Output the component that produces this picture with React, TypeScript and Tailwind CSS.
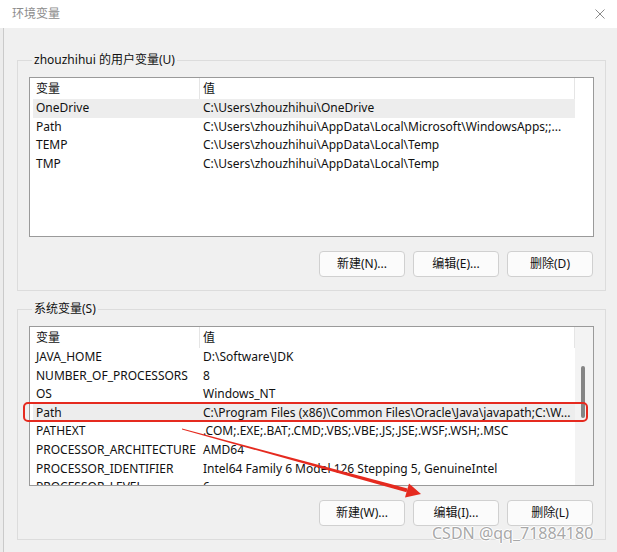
import React from "react";

const FONT = { fontFamily: '"Noto Sans", "Noto Sans CJK SC", sans-serif' };

const userRows: [string, string][] = [
  ["OneDrive", "C:\\Users\\zhouzhihui\\OneDrive"],
  ["Path", "C:\\Users\\zhouzhihui\\AppData\\Local\\Microsoft\\WindowsApps;;..."],
  ["TEMP", "C:\\Users\\zhouzhihui\\AppData\\Local\\Temp"],
  ["TMP", "C:\\Users\\zhouzhihui\\AppData\\Local\\Temp"],
];

const sysRows: [string, string][] = [
  ["JAVA_HOME", "D:\\Software\\JDK"],
  ["NUMBER_OF_PROCESSORS", "8"],
  ["OS", "Windows_NT"],
  ["Path", "C:\\Program Files (x86)\\Common Files\\Oracle\\Java\\javapath;C:\\W..."],
  ["PATHEXT", ".COM;.EXE;.BAT;.CMD;.VBS;.VBE;.JS;.JSE;.WSF;.WSH;.MSC"],
  ["PROCESSOR_ARCHITECTURE", "AMD64"],
  ["PROCESSOR_IDENTIFIER", "Intel64 Family 6 Model 126 Stepping 5, GenuineIntel"],
  ["PROCESSOR_LEVEL", "6"],
];

function VarList({
  rows,
  selected,
  scroll,
}: {
  rows: [string, string][];
  selected: number;
  scroll?: boolean;
}) {
  return (
    <div className="flex h-[160px] w-[565px] overflow-hidden border border-[#9a9a9a] bg-white">
      <div className="flex w-[545px] flex-col pl-[3px]">
        <div className="flex h-[21px] shrink-0 items-center text-[12px] text-[#111]">
          <div className="flex h-full w-[167px] items-center border-r border-[#e5e5e5] pl-[3px] pt-[1px]">变量</div>
          <div className="flex h-full w-[375px] items-center border-r border-[#e5e5e5] pl-[3px] pt-[1px]">值</div>
        </div>
        {rows.map(([k, v], i) => (
          <div
            key={k}
            className={`flex h-[18.6px] w-[542px] shrink-0 items-center whitespace-nowrap text-[12px] leading-[18.6px] text-[#111] ${
              i === selected ? "bg-[#ededed]" : ""
            }`}
          >
            <div className="w-[167px] overflow-hidden pl-[3px]">{k}</div>
            <div className="w-[375px] overflow-hidden pl-[3px]">{v}</div>
          </div>
        ))}
      </div>
      {scroll ? (
        <div className="flex w-[18px] flex-col bg-[#f3f3f3]">
          <div className="h-[39px]" />
          <div className="ml-[6px] h-[52px] w-[4px] rounded-[2px] bg-[#858585]" />
        </div>
      ) : (
        <div className="w-[18px]" />
      )}
    </div>
  );
}

function Btn({ children }: { children: React.ReactNode }) {
  return (
    <div className="flex h-[26px] w-[86px] items-center justify-center rounded-[4px] border border-[#d0d0d0] bg-[#fbfbfb] text-[12px] text-[#111]">
      {children}
    </div>
  );
}

function Group({
  label,
  rows,
  selected,
  scroll,
  buttons,
}: {
  label: string;
  rows: [string, string][];
  selected: number;
  scroll?: boolean;
  buttons: string[];
}) {
  return (
    <fieldset className="w-[589px] border border-[#dcdcdc] px-[11px] pb-[13px]">
      <legend className="ml-[3px] px-[2px] text-[12px] leading-[18px] text-[#111]">{label}</legend>
      <div className="mt-[8px]">
        <VarList rows={rows} selected={selected} scroll={scroll} />
      </div>
      <div className="mt-[14px] flex justify-end gap-[8px] pr-[1px]">
        {buttons.map((b) => (
          <Btn key={b}>{b}</Btn>
        ))}
      </div>
    </fieldset>
  );
}

export default function App() {
  return (
    <div className="relative flex h-[552px] w-[617px] flex-col overflow-hidden bg-white" style={FONT}>
      <div className="flex h-[28px] shrink-0 items-center justify-between bg-white pl-[12px] pr-[12px]">
        <span className="text-[12px] text-[#8c8c8c]">环境变量</span>
        <svg width="10" height="10" viewBox="0 0 10 10">
          <path d="M0.5 0.5 L9.5 9.5 M9.5 0.5 L0.5 9.5" stroke="#8a8a8a" strokeWidth="1" />
        </svg>
      </div>
      <div className="flex flex-1">
        <div className="w-[3px] bg-[#ececec]" />
        <div className="w-[1px] bg-[#cacaca]" />
        <div className="flex flex-1 flex-col gap-[9px] bg-[#f0f0f0] pl-[13px] pt-[23px]">
          <Group
            label="zhouzhihui 的用户变量(U)"
            rows={userRows}
            selected={0}
            buttons={["新建(N)...", "编辑(E)...", "删除(D)"]}
          />
          <Group
            label="系统变量(S)"
            rows={sysRows}
            selected={3}
            scroll
            buttons={["新建(W)...", "编辑(I)...", "删除(L)"]}
          />
        </div>
      </div>

      {/* annotation: red rectangle */}
      <div className="absolute left-[23px] top-[402px] h-[20px] w-[565px] rounded-[5px] border-[2.5px] border-[#e52a1f]" />

      {/* annotation: red arrow */}
      <svg className="absolute left-0 top-0" width="617" height="552" viewBox="0 0 617 552">
        <polygon points="182,428.5 182,429.5 406.5,492.2 407.5,488.6" fill="#e52a1f" />
        <polygon points="409,483.5 421,494 405,497.5" fill="#e52a1f" />
      </svg>

      {/* watermark */}
      <div
        className="absolute left-[432px] top-[522px] whitespace-nowrap text-[16px] leading-[22px] text-[#a8a8a8]"
        style={{ textShadow: "1px 0 0 #fff, -1px 0 0 #fff, 0 1px 0 #fff, 0 -1px 0 #fff" }}
      >
        CSDN @qq_71884180
      </div>
    </div>
  );
}
